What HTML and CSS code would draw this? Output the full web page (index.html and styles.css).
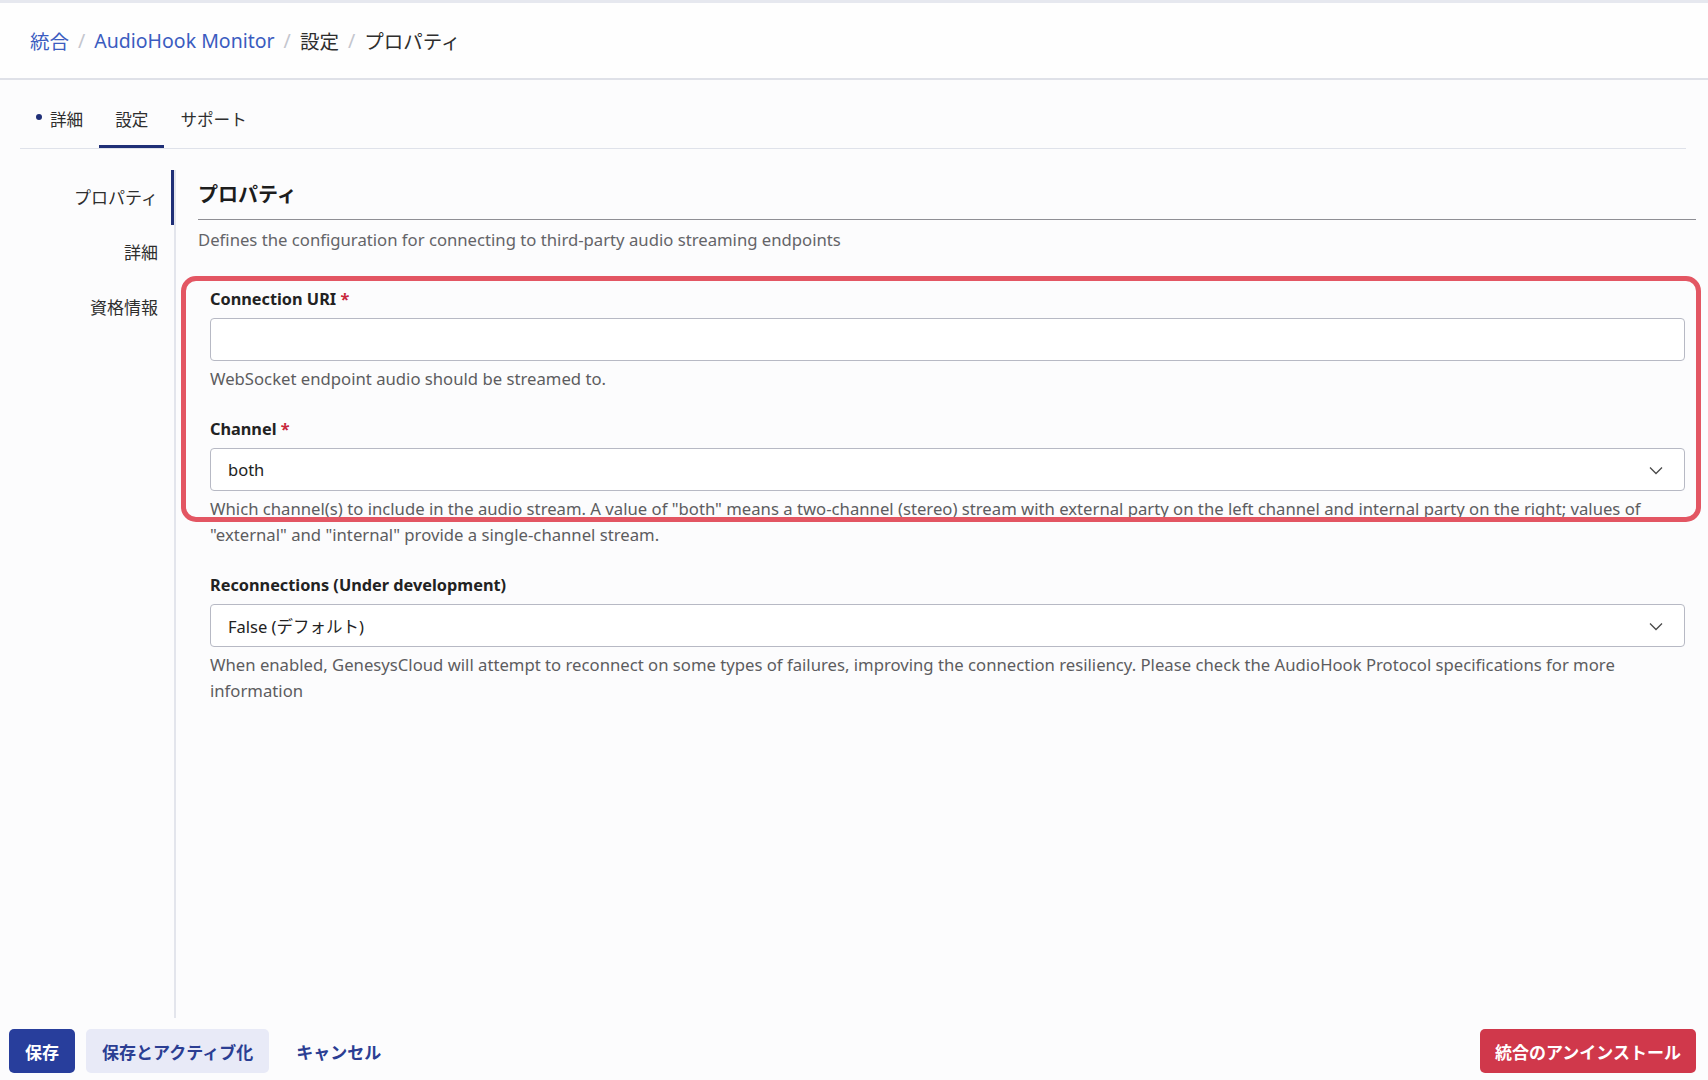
FILE: index.html
```html
<!DOCTYPE html>
<html lang="ja">
<head>
  <meta charset="UTF-8" />
  <meta name="viewport" content="width=device-width, initial-scale=1.0"/>
  <title>AudioHook Monitor - 設定</title>
  <link rel="stylesheet" href="styles.css">
</head>
<body>
  <header class="crumbs">
    <a href="#">統合</a>
    <span class="sep">/</span>
    <a href="#">AudioHook Monitor</a>
    <span class="sep">/</span>
    <span>設定</span>
    <span class="sep">/</span>
    <span>プロパティ</span>
  </header>

  <nav class="tabs">
    <div class="tab"><span class="dot"></span>詳細</div>
    <div class="tab active">設定</div>
    <div class="tab">サポート</div>
  </nav>

  <main class="main">
    <ul class="side">
      <li class="active">プロパティ</li>
      <li>詳細</li>
      <li>資格情報</li>
    </ul>

    <section class="content">
      <h2>プロパティ</h2>
      <p class="desc">Defines the configuration for connecting to third-party audio streaming endpoints</p>

      <div class="fields">
        <!-- 注釈の枠 -->
        <div class="mark"></div>

        <div class="field">
          <label>Connection URI <span class="req">*</span></label>
          <input type="text" class="input">
          <p class="help">WebSocket endpoint audio should be streamed to.</p>
        </div>

        <div class="field">
          <label>Channel <span class="req">*</span></label>
          <div class="select">
            <span>both</span>
            <svg width="16" height="16" viewBox="0 0 16 16"><path d="M2 5.5l6 6 6-6" fill="none" stroke="#4a4a4a" stroke-width="1.3"/></svg>
          </div>
          <p class="help">Which channel(s) to include in the audio stream. A value of "both" means a two-channel (stereo) stream with external party on the left channel and internal party on the right; values of "external" and "internal" provide a single-channel stream.</p>
        </div>

        <div class="field">
          <label>Reconnections (Under development)</label>
          <div class="select">
            <span>False (デフォルト)</span>
            <svg width="16" height="16" viewBox="0 0 16 16"><path d="M2 5.5l6 6 6-6" fill="none" stroke="#4a4a4a" stroke-width="1.3"/></svg>
          </div>
          <p class="help">When enabled, GenesysCloud will attempt to reconnect on some types of failures, improving the connection resiliency. Please check the AudioHook Protocol specifications for more information</p>
        </div>
      </div>
    </section>
  </main>

  <footer class="actions">
    <div class="left">
      <button class="btn primary">保存</button>
      <button class="btn secondary">保存とアクティブ化</button>
      <button class="btn ghost">キャンセル</button>
    </div>
    <button class="btn danger">統合のアンインストール</button>
  </footer>
</body>
</html>
```

FILE: styles.css
```css
* {
  box-sizing: border-box;
}

body {
  font-family: "Noto Sans", "Noto Sans CJK JP", sans-serif;
  background: #fcfcfd;
  color: #2e2e2e;
  margin: 0;
  height: 100vh;
  display: flex;
  flex-direction: column;
  border-top: 3px solid #e6e8ef;
}

.crumbs {
  height: 77px;
  flex: none;
  display: flex;
  align-items: center;
  padding-left: 30px;
  font-size: 19.5px;
  background: #fefefe;
  border-bottom: 2px solid #dfe1e8;
}

.crumbs a {
  color: #3b5cc0;
  text-decoration: none;
}

.crumbs .sep {
  color: #c4c6ce;
  margin: 0 9px;
}

.tabs {
  flex: none;
  display: flex;
  margin: 12px 22px 0 20px;
  border-bottom: 1px solid #dfe2ea;
}

.tab {
  font-size: 16.6px;
  line-height: 24px;
  padding: 16px 16px 13px;
  border-bottom: 3px solid transparent;
  display: flex;
  align-items: center;
}

.tab.active {
  border-bottom-color: #1f2f77;
}

.dot {
  width: 6px;
  height: 6px;
  border-radius: 50%;
  background: #1f2f77;
  margin: -6px 8px 0 0;
}

.main {
  flex: 1;
  display: flex;
  min-height: 0;
}

.side {
  list-style: none;
  margin: 21px 0 0;
  padding: 0;
  width: 176px;
  border-right: 2px solid #e3e5ec;
  flex: none;
}

.side li {
  height: 55px;
  line-height: 55px;
  text-align: right;
  padding-right: 16px;
  font-size: 17px;
}

.side li.active {
  box-shadow: inset -3px 0 0 #1f2f77;
}

.content {
  flex: 1;
  padding: 32px 12px 0 22px;
}

.content h2 {
  font-size: 20px;
  line-height: 28px;
  font-weight: bold;
  margin: 0;
  padding-bottom: 10px;
  border-bottom: 1.5px solid #8e8e94;
  color: #1d1d1d;
}

.desc {
  margin: 7px 0 0;
  font-size: 16.7px;
  line-height: 26px;
  color: #646468;
}

.fields {
  position: relative;
  margin: 34px 11px 0 12px;
  display: flex;
  flex-direction: column;
  gap: 25px;
}

.mark {
  position: absolute;
  top: -11px;
  left: -29px;
  right: -16px;
  height: 246px;
  border: 5px solid #e35663;
  border-radius: 15px;
  pointer-events: none;
}

.field label {
  display: block;
  font-size: 16.3px;
  line-height: 24px;
  font-weight: bold;
  color: #222;
  margin-bottom: 7px;
}

.req {
  color: #c8283c;
}

.input,
.select {
  width: 100%;
  height: 43px;
  background: #fff;
  border: 1px solid #b7b9c4;
  border-radius: 4px;
  font: inherit;
}

.select {
  display: flex;
  align-items: center;
  justify-content: space-between;
  padding: 0 20px 0 17px;
  font-size: 16.5px;
  color: #222;
}

.help {
  margin: 5px 0 0;
  font-size: 16.7px;
  line-height: 26px;
  color: #5c5c60;
}

.actions {
  flex: none;
  display: flex;
  justify-content: space-between;
  align-items: center;
  padding: 11px 12px 7px 9px;
}

.left {
  display: flex;
  gap: 11px;
}

.btn {
  font-family: inherit;
  font-size: 17px;
  font-weight: bold;
  height: 44px;
  padding: 0 16px;
  border: none;
  border-radius: 5px;
  cursor: pointer;
}

.btn.primary {
  background: #283e9c;
  color: #fff;
}

.btn.secondary {
  background: #e8eaf7;
  color: #2b3e93;
}

.btn.ghost {
  background: none;
  color: #2b3e93;
}

.btn.danger {
  background: #d0384b;
  color: #fff;
  padding: 0 15px;
}
```
